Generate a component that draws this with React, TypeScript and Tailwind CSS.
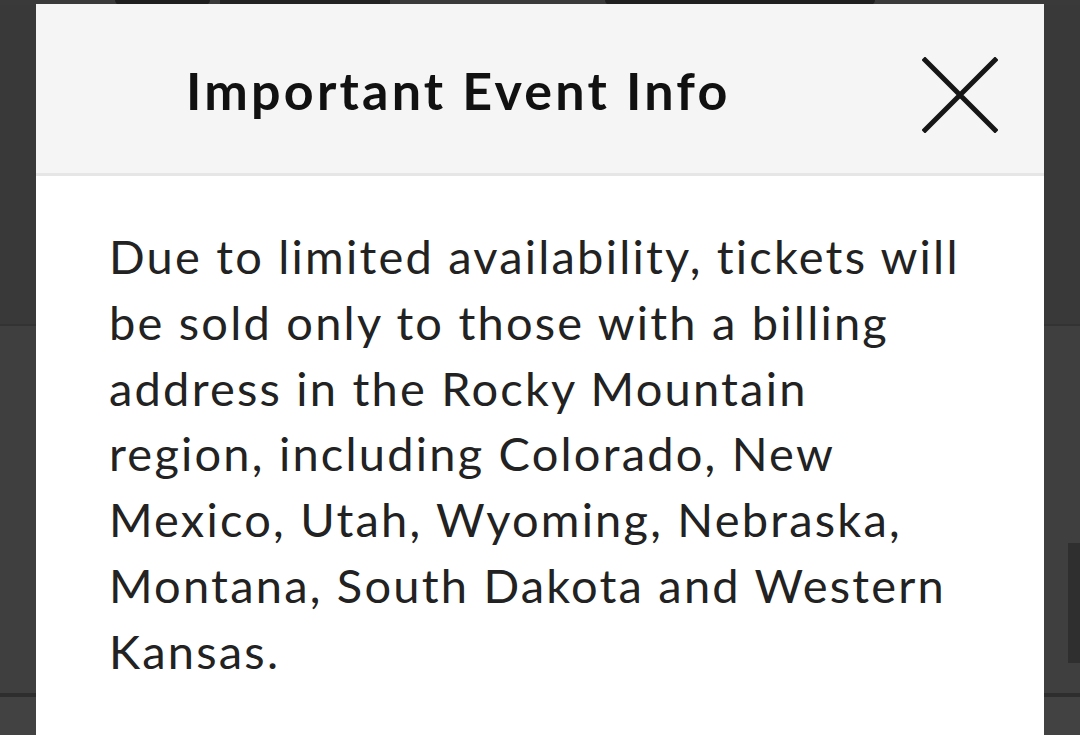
const lines = [
  'Due to limited availability, tickets will',
  'be sold only to those with a billing',
  'address in the Rocky Mountain',
  'region, including Colorado, New',
  'Mexico, Utah, Wyoming, Nebraska,',
  'Montana, South Dakota and Western',
  'Kansas.',
];

const CloseIcon = () => (
  <svg width="76" height="76" viewBox="0 0 76 76" fill="none">
    <path d="M3 3 L73 73 M73 3 L3 73" stroke="#161616" strokeWidth="5" strokeLinecap="square" />
  </svg>
);

const Backdrop = () => (
  <div className="flex flex-col h-full">
    {/* top strip peeking above the modal */}
    <div className="h-[5px] bg-[#3a3a3a] flex">
      <div className="ml-[115px] w-[95px] bg-[#1e1e1e] rounded-b-md" />
      <div className="ml-[10px] w-[170px] bg-[#222222]" />
      <div className="ml-[215px] w-[270px] bg-[#1f1f1f] rounded-b-xl" />
    </div>
    <div className="h-[319px] bg-[#393939]" />
    <div className="h-[2px] bg-[#333333]" />
    <div className="flex-1 flex flex-col bg-[#3f3f3f]">
      <div className="h-[217px]" />
      <div className="h-[120px] flex justify-end">
        <div className="w-[12px] bg-[#2f2f2f]" />
      </div>
      <div className="h-[30px]" />
      <div className="h-[4px] bg-[#2e2e2e]" />
      <div className="flex-1 bg-[#424242]" />
    </div>
  </div>
);

export default function App() {
  return (
    <div
      className="relative w-[1080px] h-[735px] overflow-hidden bg-[#3d3d3d]"
      style={{ fontFamily: 'Lato, "Noto Sans", sans-serif' }}
    >
      <Backdrop />

      <div className="absolute left-[36px] top-[4px] w-[1008px] h-[760px] bg-white flex flex-col">
        <div className="h-[172px] bg-[#f5f5f5] border-b-[3px] border-[#e6e6e6] flex items-center justify-between pl-[150px] pr-[46px]">
          <h2 className="text-[52px] font-bold text-[#111111] tracking-[0.062em] leading-none mt-[2px]">
            Important Event Info
          </h2>
          <button aria-label="Close" className="mt-[12px]">
            <CloseIcon />
          </button>
        </div>
        <div className="pl-[73px] pt-[48px] text-[47px] leading-[65.8px] text-[#222222] tracking-[0.047em]">
          {lines.map((l) => (
            <div key={l}>{l}</div>
          ))}
        </div>
      </div>
    </div>
  );
}
